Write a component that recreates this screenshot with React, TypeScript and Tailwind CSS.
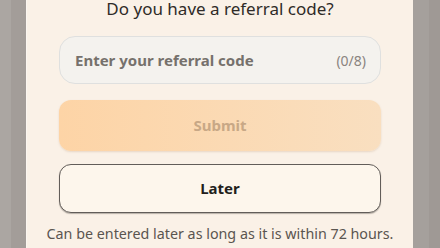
import React from 'react';

const font = { fontFamily: '"Noto Sans", "Open Sans", sans-serif' };

export default function App() {
  return (
    <div className="flex h-[248px] w-[440px] overflow-hidden bg-[#a7a19d]" style={font}>
      <div className="w-[11px] shrink-0 bg-[#aba6a2]" />
      <div className="w-[15px] shrink-0 bg-[#a39d99]" />
      <ReferralPanel />
      <div className="w-[16px] shrink-0 bg-[#a5a09c]" />
      <div className="w-[11px] shrink-0 bg-[#9f9995]" />
    </div>
  );
}

function ReferralPanel() {
  return (
    <div className="flex w-[387px] shrink-0 flex-col border-l border-[#fbf6f0] bg-[#faf1e7] pl-[32px] pr-[32px]">
      <h2 className="text-center text-[17px] leading-[18px] text-[#2f2b28]">
        Do you have a referral code?
      </h2>
      <div className="mt-[18px] flex h-[48px] items-center justify-between rounded-[16px] border border-[#dfe0df] bg-[#f4f2ee] pl-[15px] pr-[14px]">
        <span className="text-[15px] font-bold text-[#76716c]">Enter your referral code</span>
        <span className="text-[14px] text-[#8a847f]">(0/8)</span>
      </div>
      <button className="mt-[16px] flex h-[51px] items-center justify-center rounded-[12px] bg-gradient-to-r from-[#fdd4a6] to-[#f9dfc0] text-[15px] font-bold text-[#c8a886] shadow-[0_1px_2px_rgba(180,140,100,0.25)]">
        Submit
      </button>
      <button className="mt-[13px] flex h-[49px] items-center justify-center rounded-[12px] border-[1.5px] border-[#625d59] bg-[#fdf6ec] text-[15px] font-bold text-[#231f1c] shadow-[0_1px_1px_rgba(60,55,50,0.35)]">
        Later
      </button>
      <p className="-mx-[24px] mt-[11px] whitespace-nowrap text-center text-[14.3px] leading-[20px] text-[#5a5550]">
        Can be entered later as long as it is within 72 hours.
      </p>
    </div>
  );
}
